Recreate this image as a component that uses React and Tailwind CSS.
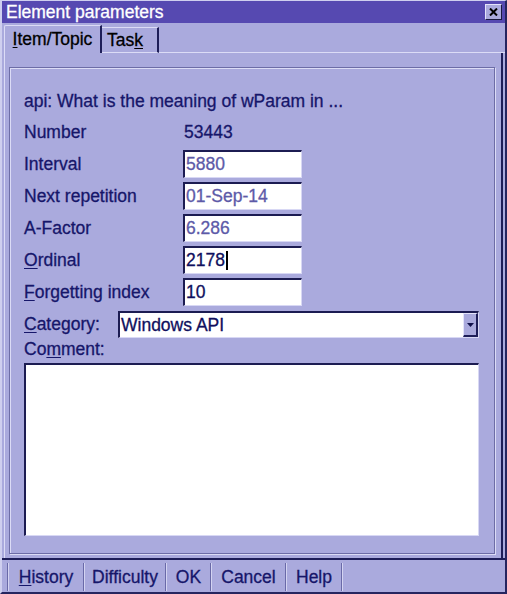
import React from 'react'

const FONT = "font-['Liberation_Sans',Arial,sans-serif]"

const Field = ({ label, u, value, disabled, cursor }) => (
  <div className="flex items-center h-[28px]">
    <div className="w-[159px] shrink-0">
      {u ? (
        <span>
          <span className="underline underline-offset-2">{label[0]}</span>
          {label.slice(1)}
        </span>
      ) : (
        label
      )}
    </div>
    <div className="w-[119px] h-[28px] bg-white border-t-2 border-l-2 border-b border-r border-t-[#1c1c52] border-l-[#1c1c52] border-b-[#d8d8f4] border-r-[#d8d8f4] flex items-center pl-[1px]">
      <span className={disabled ? 'text-[#5d5aa8]' : 'text-[#10105e]'}>{value}</span>
      {cursor && <span className="w-[2px] h-[19px] bg-black ml-[1px]" />}
    </div>
  </div>
)

const Sep = () => (
  <div className="w-[2px] h-[28px] border-l border-l-[#6a6aa8] border-r border-r-[#d4d4f2]" />
)

const BarButton = ({ children, w }) => (
  <button type="button" className={`${w} h-full flex items-center justify-center`}>
    {children}
  </button>
)

export default function App() {
  return (
    <div
      className={`w-[507px] h-[594px] bg-[#aaaadd] ${FONT} text-[17.5px] [-webkit-text-stroke:0.3px_currentColor] text-[#16166a] flex flex-col border-t border-l-2 border-t-[#cfcfef] border-l-[#cfcfef] border-r-2 border-r-[#25255f] border-b-2 border-b-[#25255f]`}
    >
      {/* Title bar */}
      <div className="h-[22px] bg-[#5649b1] flex items-center justify-between pl-[4px] pr-[3px]">
        <span className="text-white leading-none pt-[2px]">Element parameters</span>
        <div className="w-[17px] h-[16px] bg-[#aaaadd] border-t border-l border-t-[#e4e4fa] border-l-[#e4e4fa] border-r border-b border-r-[#1a1a40] border-b-[#1a1a40] flex items-center justify-center">
          <svg width="9" height="8" viewBox="0 0 9 8">
            <path d="M1 0.5 L8 7.5 M8 0.5 L1 7.5" stroke="#000" strokeWidth="2" />
          </svg>
        </div>
      </div>

      {/* Tabs */}
      <div className="mt-[2px] h-[28px] flex items-end pl-[2px]">
        <div className="w-[98px] h-[28px] border-t border-l border-t-[#dcdcf6] border-l-[#dcdcf6] border-r-2 border-r-[#1e1e58] rounded-tl-[2px] flex items-center justify-center text-black">
          <span>
            <span className="underline underline-offset-2">I</span>tem/Topic
          </span>
        </div>
        <div className="w-[57px] h-[26px] border-t border-t-[#dcdcf6] border-r-2 border-r-[#1e1e58] border-b border-b-[#dcdcf6] flex items-center pl-[5px] text-black">
          <span>
            Tas<span className="underline underline-offset-2">k</span>
          </span>
        </div>
        <div className="flex-1 border-b border-b-[#dcdcf6]" />
      </div>

      {/* Tab panel */}
      <div className="flex-1 mx-[2px] border-l border-l-[#dcdcf6] border-r-2 border-r-[#1e1e58] pt-[14px] pl-[4px] pr-[6px] pb-[4px] flex flex-col">
        <div className="flex-1 border border-[#6d6da6] shadow-[1px_1px_0_#dcdcf6,inset_1px_1px_0_#dcdcf6] pt-[23px] pl-[14px] pr-[15px] pb-[17px] flex flex-col">
          <div className="h-[20px] leading-[20px]">api: What is the meaning of wParam in ...</div>
          <div className="flex items-center h-[28px] mt-[7px]">
            <div className="w-[159px] shrink-0">Number</div>
            <div className="pl-[1px]">53443</div>
          </div>
          <div className="flex flex-col gap-[4px] mt-[4px]">
            <Field label="Interval" value="5880" disabled />
            <Field label="Next repetition" value="01-Sep-14" disabled />
            <Field label="A-Factor" value="6.286" disabled />
            <Field label="Ordinal" u value="2178" cursor />
            <Field label="Forgetting index" u value="10" />
          </div>
          <div className="flex items-center h-[27px] mt-[5px]">
            <div className="w-[94px] shrink-0">
              <span className="underline underline-offset-2">C</span>ategory:
            </div>
            <div className="flex-1 h-[27px] bg-white border-t-2 border-l-2 border-b border-r border-t-[#1c1c52] border-l-[#1c1c52] border-b-[#d8d8f4] border-r-[#d8d8f4] flex items-center">
              <span className="flex-1 pl-[1px] text-[#10105e]">Windows API</span>
              <div className="w-[15px] h-full bg-[#aaaadd] border-t border-l border-t-[#e4e4fa] border-l-[#e4e4fa] border-r-2 border-b-2 border-r-[#1e1e58] border-b-[#1e1e58] flex items-center justify-center">
                <svg width="7" height="4" viewBox="0 0 7 4">
                  <path d="M0 0 H7 L3.5 4 Z" fill="#10104a" />
                </svg>
              </div>
            </div>
          </div>
          <div className="h-[20px] leading-[20px] mt-[1px]">
            Co<span className="underline underline-offset-2">m</span>ment:
          </div>
          <div className="mt-[4px] flex-1 bg-white border-t-2 border-l-2 border-b border-r border-t-[#1c1c52] border-l-[#1c1c52] border-b-[#d8d8f4] border-r-[#d8d8f4]" />
        </div>
      </div>

      {/* Button bar */}
      <div className="h-[34px] border-t-2 border-t-[#1e1e58] flex items-center pl-[5px] pt-[2px]">
        <Sep />
        <BarButton w="w-[74px]">
          <span>
            <span className="underline underline-offset-2">H</span>istory
          </span>
        </BarButton>
        <Sep />
        <BarButton w="w-[80px]">Difficulty</BarButton>
        <Sep />
        <BarButton w="w-[43px]">OK</BarButton>
        <Sep />
        <BarButton w="w-[73px]">Cancel</BarButton>
        <Sep />
        <BarButton w="w-[54px]">Help</BarButton>
        <Sep />
      </div>
    </div>
  )
}
